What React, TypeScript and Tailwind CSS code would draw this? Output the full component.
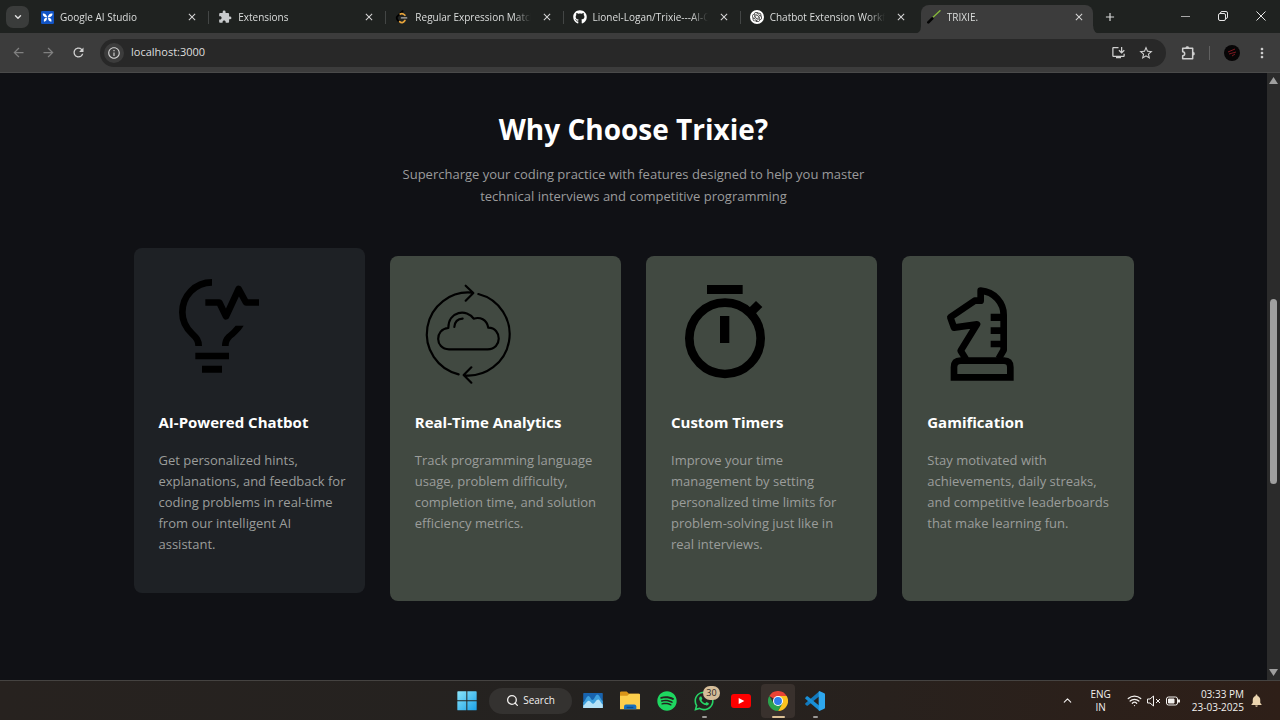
import type { ReactNode } from "react";
import { FaGithub, FaSpotify, FaWhatsapp } from "react-icons/fa";
import { SiOpenai } from "react-icons/si";
import { MdExtension, MdOutlineInstallDesktop, MdStarOutline, MdRefresh, MdArrowBack, MdArrowForward, MdInfoOutline, MdMoreVert, MdClose, MdAdd, MdNotifications } from "react-icons/md";
import { ChevronDown, ChevronUp, Search, Wifi } from "lucide-react";

function StudioIcon() {
  return (
    <svg viewBox="0 0 39 39" className="size-[13px]">
      <rect width="39" height="39" rx="4" fill="#1254c4" />
      <path d="M19 19C15 8 9 6 5 8c1 8 5 11 14 11ZM20 19C23 8 30 6 35 8c-2 8-6 11-15 11ZM18 20C11 20 7 24 9 32c6-1 9-5 9-12ZM21 20c7 0 12 4 10 12-7-1-10-5-10-12Z" fill="#fff" />
    </svg>
  );
}

function CodeIcon() {
  return (
    <svg viewBox="0 0 24 24" className="size-[14px]" fill="none" strokeWidth="3" strokeLinecap="round">
      <path d="M13 2 4 11c-2 2-1 5 2 8" stroke="#000" />
      <path d="M9 7c3-2 5-1 8 2" stroke="#e7a43b" />
      <path d="M11 13.5h9" stroke="#b3b3b3" strokeWidth="2.4" />
      <path d="M8 20c3 3 6 2 9-2" stroke="#e7a43b" />
    </svg>
  );
}

function SaberIcon() {
  return (
    <svg viewBox="0 0 42 42" className="size-[14px]" fill="none" strokeLinecap="round">
      <path d="M18 22 39 2" stroke="#86b93a" strokeWidth="4" />
      <path d="M4 37 16 25" stroke="#050505" strokeWidth="8" />
    </svg>
  );
}

function GptIcon() {
  return (
    <span className="flex size-[14px] items-center justify-center rounded-full bg-white text-[#202020]">
      <SiOpenai size={10} />
    </span>
  );
}

const tabs: { title: string; icon: ReactNode }[] = [
  { title: "Google AI Studio", icon: <StudioIcon /> },
  { title: "Extensions", icon: <MdExtension size={14} className="text-[#c8cacc]" /> },
  { title: "Regular Expression Matchin", icon: <CodeIcon /> },
  { title: "Lionel-Logan/Trixie---AI-Ch", icon: <FaGithub size={14} className="text-white" /> },
  { title: "Chatbot Extension Workflo", icon: <GptIcon /> },
  { title: "TRIXIE.", icon: <SaberIcon /> },
];

function Tab({ title, icon, active }: { title: string; icon: ReactNode; active: boolean }) {
  return (
    <div
      className={
        active
          ? "relative mr-px ml-1 flex h-7 min-w-0 flex-1 items-center rounded-t-lg bg-[#3c3c3c] pr-[6px] pb-1 pl-[6px]"
          : "flex h-7 min-w-0 flex-1 items-center border-l border-transparent pr-2 pb-1 pl-[9px]"
      }
    >
      {active && (
        <svg viewBox="0 0 188 8" preserveAspectRatio="none" className="absolute -right-2 -bottom-px -left-2 h-2 w-[calc(100%+16px)] text-[#3c3c3c]">
          <path d="M0 8Q8 8 8 0H180Q180 8 188 8Z" fill="currentColor" />
        </svg>
      )}
      <button className="relative flex min-w-0 flex-1 items-center gap-[6px] text-left">
        <span className="shrink-0">{icon}</span>
        <span className="min-w-0 flex-1 mask-r-from-85% text-[10px] leading-4 whitespace-nowrap text-[#dcdedd]">{title}</span>
      </button>
      <button aria-label={`Close ${title}`} className="relative ml-2 flex size-4 shrink-0 items-center justify-center text-[#d6d6d6]">
        <MdClose size={12} />
      </button>
    </div>
  );
}

function TabStrip() {
  return (
    <div className="flex h-[33px] shrink-0 items-end bg-[#1f2220]">
      <button aria-label="Search tabs" className="mb-[5px] ml-[6px] flex h-[22px] w-[23px] shrink-0 items-center justify-center rounded-[7px] bg-[#3a3c3b] text-[#e0e0e0]">
        <ChevronDown size={10} strokeWidth={3.4} />
      </button>
      <div className="ml-[2px] flex max-w-[1063px] min-w-0 flex-1">
        {tabs.map((tab, i) => (
          <div key={tab.title} className="flex min-w-0 flex-1 items-center">
            {i > 0 && i < tabs.length - 1 && <span className="-mr-px mb-1 h-[13px] w-px shrink-0 bg-[#434645]" />}
            <Tab title={tab.title} icon={tab.icon} active={i === tabs.length - 1} />
          </div>
        ))}
      </div>
      <button aria-label="New tab" className="mb-2 ml-2 flex size-4 shrink-0 items-center justify-center text-[#dcdcdc]">
        <MdAdd size={14} />
      </button>
      <div className="mb-[9px] ml-auto flex shrink-0 items-center gap-[22px] pr-[11px] text-[#e6e6e6]">
        <button aria-label="Minimize" className="flex size-4 items-center justify-center">
          <span className="h-px w-[9px] bg-[#a8a8a8]" />
        </button>
        <button aria-label="Restore" className="flex size-4 items-center justify-center">
          <svg viewBox="0 0 10 10" className="size-[10px]" fill="none" stroke="currentColor">
            <rect x=".5" y="2.5" width="7" height="7" rx="1.5" />
            <path d="M2.5 2.5V2Q2.500 .5 4 .5H8Q9.500 .5 9.500 2V6Q9.500 7.500 8 7.500" />
          </svg>
        </button>
        <button aria-label="Close window" className="flex size-4 items-center justify-center">
          <svg viewBox="0 0 10 10" className="size-[10px]" stroke="currentColor">
            <path d="m.5.5 9 9M9.500.5l-9 9" />
          </svg>
        </button>
      </div>
    </div>
  );
}

function PuzzleIcon() {
  return (
    <svg viewBox="0 0 42 42" className="size-[14px]" fill="none" stroke="currentColor" strokeWidth="4.500" strokeLinejoin="round">
      <path d="M5 7H35V38H5V29Q11 29 11 23Q11 17 5 17Z" />
      <path d="M14 6Q14 1 19 1Q24 1 24 6ZM36 18Q41 18 41 23Q41 28 36 28Z" fill="currentColor" strokeWidth="1" />
    </svg>
  );
}

function Toolbar() {
  return (
    <div className="flex h-10 shrink-0 items-center border-b border-[#4a4a4a] bg-[#3c3c3c] pr-[10px] pl-[11px] text-[#d0d0d0]">
      <div className="flex shrink-0 gap-[15px]">
        <button aria-label="Back" className="text-[#808080]"><MdArrowBack size={15} /></button>
        <button aria-label="Forward" className="text-[#808080]"><MdArrowForward size={15} /></button>
        <button aria-label="Reload"><MdRefresh size={15} /></button>
      </div>
      <div className="ml-[14px] flex h-7 min-w-0 flex-1 items-center rounded-full bg-[#282828] pr-3 pl-1">
        <button aria-label="Site information" className="flex size-5 shrink-0 items-center justify-center rounded-full bg-[#3c3c3c]">
          <MdInfoOutline size={14} />
        </button>
        <input aria-label="Address" defaultValue="localhost:3000" className="ml-[7px] min-w-0 flex-1 bg-transparent text-[11px] text-[#dedede] outline-none" />
        <button aria-label="Install app"><MdOutlineInstallDesktop size={15} /></button>
        <button aria-label="Bookmark" className="ml-3"><MdStarOutline size={16} /></button>
      </div>
      <button aria-label="Extensions" className="ml-[15px]"><PuzzleIcon /></button>
      <span className="ml-[14px] h-[14px] w-px bg-[#606060]" />
      <button aria-label="Profile" className="ml-[14px] flex size-4 items-center justify-center rounded-full bg-[#070506]">
        <svg viewBox="0 0 16 16" className="size-4" fill="none" stroke="#7c1820">
          <path d="m4 7 7-3M5 9l7-2M8 11l3-2" />
        </svg>
      </button>
      <button aria-label="Menu" className="ml-[14px]"><MdMoreVert size={16} /></button>
    </div>
  );
}

function BulbArt() {
  return (
    <svg viewBox="87 99 321 321" className="mb-[30px] size-[107px]">
      <g fill="none" stroke="#000" strokeWidth="20">
        <path d="M246 127C195 127 157 168 157 217C157 248 170 266 186 281C200 294 206 302 206 318" />
        <path d="M226 187.500H268L288 229L326 147L348 187.500H387" strokeLinejoin="round" />
      </g>
      <path d="M317 257H341C330 275 315 287 306 295C298 303 296 310 296 318H276C276 300 284 288 292 282C302 274 310 265 317 257ZM196 338H297V358H196ZM216 377H276V398H216Z" />
    </svg>
  );
}

function CloudArt() {
  return (
    <svg viewBox="90 93 321 321" className="mb-[22px] size-[107px]" fill="none" stroke="#000" strokeWidth="6.500" strokeLinecap="round" strokeLinejoin="round">
      <path d="M221 373A124.500 124.500 0 0 1 262 128M242 107L265 129L242 152" />
      <path d="M280 132A124.200 124.200 0 0 1 237 376M259 352L236 375L259 398" />
      <path d="M192 298H308C352 298 352 234 310 233C305 208 285 200 266 206C246 176 190 182 190 234C149 236 149 298 192 298Z" />
      <path d="M208 231Q210 207 233 206" />
    </svg>
  );
}

function TimerArt() {
  return (
    <svg viewBox="93 93 321 321" className="mb-[22px] size-[107px]">
      <circle cx="255" cy="265" r="107" fill="none" stroke="#000" strokeWidth="26" />
      <path d="M201 105H308V132H201ZM240 198H268V279H240ZM348 153L367 171L345 193L326 175Z" />
    </svg>
  );
}

function KnightArt() {
  return (
    <svg viewBox="97 93 321 321" className="mb-[22px] size-[107px]">
      <g fill="none" stroke="#000" strokeWidth="20">
        <path d="M214 328L198 302L247 223L178 233L167 202L240 152H258V122C300 125 327 160 327 195V300L312 326" strokeLinejoin="round" />
        <path d="M178 382V352Q178 332 198 332H328Q347 332 347 352V382Z" />
      </g>
      <path d="M288 191H328V213H288ZM288 232H328V252H288ZM288 272H328V292H288Z" />
    </svg>
  );
}

const features = [
  {
    title: "AI-Powered Chatbot",
    text: "Get personalized hints,\nexplanations, and feedback for\ncoding problems in real-time\nfrom our intelligent AI\nassistant.",
    art: <BulbArt />,
    raised: true,
  },
  {
    title: "Real-Time Analytics",
    text: "Track programming language\nusage, problem difficulty,\ncompletion time, and solution\nefficiency metrics.",
    art: <CloudArt />,
    raised: false,
  },
  {
    title: "Custom Timers",
    text: "Improve your time\nmanagement by setting\npersonalized time limits for\nproblem-solving just like in\nreal interviews.",
    art: <TimerArt />,
    raised: false,
  },
  {
    title: "Gamification",
    text: "Stay motivated with\nachievements, daily streaks,\nand competitive leaderboards\nthat make learning fun.",
    art: <KnightArt />,
    raised: false,
  },
];

function Features() {
  return (
    <main className="min-w-0 flex-1 overflow-hidden bg-[#101115] px-6 pt-[34px]">
      <h2 className="text-center text-[28px] leading-[44px] font-bold text-white">Why Choose Trixie?</h2>
      <p className="mt-3 text-center text-[13px] leading-[22px] whitespace-pre-line text-[#9b9b9c]">
        {"Supercharge your coding practice with features designed to help you master\ntechnical interviews and competitive programming"}
      </p>
      <div className="mx-auto mt-[49px] grid max-w-[1000px] grid-cols-4 gap-[25px]">
        {features.map((f) => (
          <article
            key={f.title}
            className={
              f.raised
                ? "-mt-2 mb-2 rounded-lg bg-[#1e2125] p-[25px] pb-[38px]"
                : "rounded-lg bg-[#414941] p-[25px] pb-[46px]"
            }
          >
            {f.art}
            <h3 className="text-[15px] leading-6 font-bold whitespace-nowrap text-white">{f.title}</h3>
            <p className="mt-4 text-[13px] leading-[21px] whitespace-pre text-[#9b9d9b]">{f.text}</p>
          </article>
        ))}
      </div>
    </main>
  );
}

function Scrollbar() {
  return (
    <div aria-hidden="true" className="flex w-[13px] shrink-0 flex-col items-center justify-between bg-[#2b2b2b] py-1">
      <svg viewBox="0 0 9 7" className="h-[7px] w-[9px]"><path d="M4.500 0 9 7H0Z" fill="#9f9f9f" /></svg>
      <span className="mt-[29px] h-[185px] w-[7px] rounded-full bg-[#9f9f9f]" />
      <svg viewBox="0 0 9 7" className="h-[7px] w-[9px]"><path d="M4.500 7 9 0H0Z" fill="#9f9f9f" /></svg>
    </div>
  );
}

function WindowsLogo() {
  return (
    <svg viewBox="0 0 60 60" className="size-5">
      <defs>
        <linearGradient id="win" x1="0" y1="0" x2="1" y2="1">
          <stop offset="0" stopColor="#8be6fb" />
          <stop offset="1" stopColor="#1a9fe6" />
        </linearGradient>
      </defs>
      <path d="M3 1H28V28H1V3Q1 1 3 1ZM31 1H57Q59 1 59 3V28H31ZM1 31H28V58H3Q1 58 1 56ZM31 31H59V56Q59 58 57 58H31Z" fill="url(#win)" />
    </svg>
  );
}

function MonitorIcon() {
  return (
    <svg viewBox="0 0 60 46" className="h-[15px] w-5">
      <rect width="60" height="46" rx="2" fill="#1863ae" />
      <path d="M0 28C7 26 9 9 16 9C22 9 24 24 30 21C36 17 38 4 44 5C51 6 54 22 60 24V46H0Z" fill="#3ea0dd" />
      <path d="M0 38C8 36 11 23 17 24C23 25 26 35 31 33C37 30 40 20 46 20C52 21 55 34 60 35V46H0Z" fill="#b5e2f7" />
    </svg>
  );
}

function FolderIcon() {
  return (
    <svg viewBox="0 0 60 56" className="h-[19px] w-5">
      <path d="M0 4Q0 1 4 1H20L27 8H56Q60 8 60 12V20H0Z" fill="#d99518" />
      <path d="M0 14H22L28 8H57Q60 8 60 12V54H0Z" fill="#fccf4c" />
      <path d="M12 54V46Q12 40 18 40H43Q49 40 49 46V54Z" fill="#1670bd" />
      <path d="M20 47H40V51H20Z" fill="#0b4c8b" />
    </svg>
  );
}

function YoutubeIcon() {
  return (
    <svg viewBox="0 0 60 42" className="h-[14px] w-5">
      <rect width="60" height="42" rx="9" fill="#fe0000" />
      <path d="M23 12 40 21 23 30Z" fill="#fff" />
    </svg>
  );
}

function ChromeIcon() {
  return (
    <svg viewBox="0 0 48 48" className="size-5">
      <path d="M24 24 3.200 12A24 24 0 0 1 44.800 12Z" fill="#e94335" />
      <path d="M24 12H44.800A24 24 0 0 1 24 48L34.400 30Z" fill="#fcc31e" />
      <path d="M13.600 30 3.200 12A24 24 0 0 0 24 48L34.400 30Z" fill="#2ba24c" />
      <circle cx="24" cy="24" r="12" fill="#fff" />
      <circle cx="24" cy="24" r="9.500" fill="#2f7de9" />
    </svg>
  );
}

function CodeEditorIcon() {
  return (
    <svg viewBox="0 0 60 60" className="size-5">
      <path d="M43 1V16L8 44Q6 45 5 44L1 40Q0 38 1 37Z" fill="#1279bd" />
      <path d="M43 59V44L8 16Q6 15 5 16L1 20Q0 22 1 23Z" fill="#198fd6" />
      <path d="M43 0 58 7Q60 8 60 10V50Q60 52 58 53L43 60Q41 59 41 57V3Q41 1 43 0Z" fill="#2ea7ee" />
    </svg>
  );
}

function TaskButton({ label, children, state = "idle" }: { label: string; children: ReactNode; state?: "idle" | "open" | "active" }) {
  return (
    <button
      aria-label={label}
      className={
        state === "active"
          ? "relative flex size-[34px] items-center justify-center rounded bg-[#39312d]"
          : "relative flex size-[34px] items-center justify-center rounded"
      }
    >
      {children}
      {state === "open" && <span className="absolute bottom-0 h-[2px] w-[5px] rounded-full bg-[#9c9a98]" />}
      {state === "active" && <span className="absolute bottom-0 h-[2px] w-[13px] rounded-full bg-[#dcc197]" />}
    </button>
  );
}

function Taskbar() {
  return (
    <footer className="grid h-10 shrink-0 grid-cols-[1fr_auto_1fr] items-center border-t border-[#454341] bg-linear-to-r from-[#27221f] via-[#242220] to-[#2e1f18] text-[#f2f0ee]">
      <div />
      <div className="flex items-center gap-[3px] pl-[2px]">
        <TaskButton label="Start"><WindowsLogo /></TaskButton>
        <button className="mr-px ml-[2px] flex h-[26px] w-[83px] items-center justify-center gap-1 rounded-full bg-[#343230] text-[10px]">
          <Search size={13} strokeWidth={2.4} />
          Search
        </button>
        <TaskButton label="Performance"><MonitorIcon /></TaskButton>
        <TaskButton label="File Explorer"><FolderIcon /></TaskButton>
        <TaskButton label="Spotify"><FaSpotify size={20} className="text-[#1ed760]" /></TaskButton>
        <TaskButton label="WhatsApp" state="open">
          <FaWhatsapp size={22} className="text-[#27d366]" />
          <span className="absolute top-[2px] right-px flex h-[14px] w-[17px] items-center justify-center rounded-full bg-[#d5bd99] text-[9px] text-[#292522]">30</span>
        </TaskButton>
        <TaskButton label="YouTube"><YoutubeIcon /></TaskButton>
        <TaskButton label="Chrome" state="active"><ChromeIcon /></TaskButton>
        <TaskButton label="Visual Studio Code" state="open"><CodeEditorIcon /></TaskButton>
      </div>
      <div className="flex items-center justify-end pr-4 text-[10px] leading-[13px]">
        <button aria-label="Show hidden icons"><ChevronUp size={13} /></button>
        <button className="ml-4 text-center">ENG<br />IN</button>
        <button aria-label="Network, sound and battery" className="ml-4 flex items-center gap-[5px]">
          <Wifi size={15} />
          <svg viewBox="0 0 14 12" className="h-3 w-[14px]" fill="none" stroke="currentColor">
            <path d="M.5 4H3L6.500 1V11L3 8H.5ZM9 4l4 4M13 4 9 8" />
          </svg>
          <svg viewBox="0 0 14 10" className="h-[10px] w-[14px]" fill="none" stroke="currentColor">
            <rect x=".5" y="1" width="11" height="8" rx="2" />
            <path d="M2.500 3H8V7H2.500Z" fill="currentColor" />
            <path d="M13 3.500V6.500" strokeWidth="2" />
          </svg>
        </button>
        <button className="ml-3 text-right">03:33 PM<br />23-03-2025</button>
        <button aria-label="Notifications" className="ml-[5px] text-[#ecd5b0]"><MdNotifications size={15} /></button>
      </div>
    </footer>
  );
}

export default function App() {
  return (
    <div className="flex h-screen flex-col overflow-hidden bg-[#101115] font-['Open_Sans',sans-serif]">
      <TabStrip />
      <Toolbar />
      <div className="flex min-h-0 flex-1">
        <Features />
        <Scrollbar />
      </div>
      <Taskbar />
    </div>
  );
}
